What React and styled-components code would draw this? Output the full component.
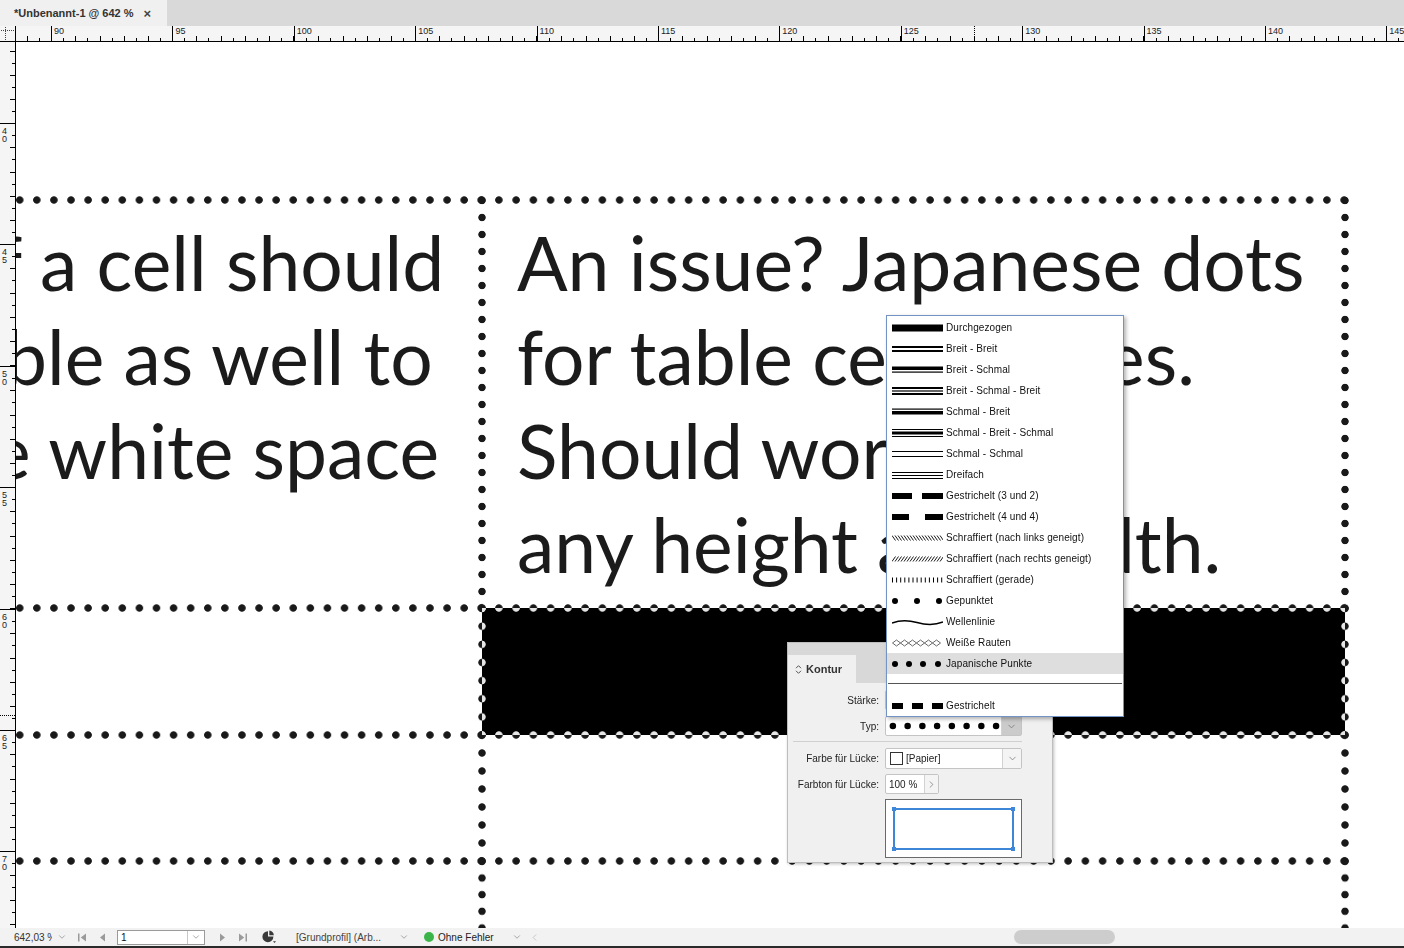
import React from "react";
import styled, { createGlobalStyle } from "styled-components";
import { ChevronDown, ChevronRight, ChevronLeft } from "lucide-react";

const SEG = 121.4;
const MM = SEG / 5;

const GlobalStyle = createGlobalStyle`
  html, body { margin: 0; padding: 0; background: #fff; overflow: hidden; }
  body { font-family: "Liberation Sans", Arial, sans-serif; }
`;

const Window = styled.div`
  width: 1404px;
  height: 948px;
  display: flex;
  flex-direction: column;
  overflow: hidden;
`;

/* ---------- tab bar ---------- */

const TabBar = styled.div`
  height: 26px;
  flex-shrink: 0;
  background: #d9d9d9;
  display: flex;
`;

const DocTab = styled.div`
  width: 167px;
  background: #f0f0f0;
  display: flex;
  align-items: center;
  gap: 10px;
  padding-left: 14px;
  box-sizing: border-box;
  font: bold 11px "Liberation Sans", Arial, sans-serif;
  color: #333;
`;

const CloseX = styled.span`
  font-size: 13px;
  color: #444;
`;

/* ---------- rulers ---------- */

const RulerRow = styled.div`
  height: 16px;
  flex-shrink: 0;
  display: flex;
`;

const Corner = styled.div`
  width: 16px;
  flex-shrink: 0;
  background: #f5f5f5;
  border-right: 1px solid #000;
  border-bottom: 1px solid #000;
  box-sizing: border-box;
  display: flex;
`;

const HRuler = styled.div`
  flex: 1;
  position: relative;
  display: flex;
  overflow: hidden;
  background: #f5f5f5;
  border-bottom: 1px solid #000;
  box-sizing: border-box;
`;

const HSeg = styled.div`
  flex: 0 0 ${SEG}px;
  margin-left: ${(p) => p.$offset || 0}px;
  box-sizing: border-box;
  border-left: 1px solid #000;
  padding-left: 2px;
  font-size: 9px;
  line-height: 11px;
  color: #222;
  background-image:
    repeating-linear-gradient(to right, transparent 0 ${MM - 1}px, #000 ${MM - 1}px ${MM}px),
    repeating-linear-gradient(to right, transparent 0 ${MM / 2 - 1}px, #000 ${MM / 2 - 1}px ${MM / 2}px, transparent ${MM / 2}px ${MM}px);
  background-size: 100% 5px, 100% 3px;
  background-position: left bottom, left bottom;
  background-repeat: no-repeat;
`;

const HCursor = styled.div`
  position: absolute;
  top: 0;
  bottom: 0;
  width: 1px;
  background: repeating-linear-gradient(to bottom, #000 0 1px, transparent 1px 2px);
`;

const Workspace = styled.div`
  flex: 1;
  min-height: 0;
  display: flex;
`;

const VRuler = styled.div`
  width: 16px;
  flex-shrink: 0;
  position: relative;
  display: flex;
  flex-direction: column;
  overflow: hidden;
  background: #f5f5f5;
  border-right: 1px solid #000;
  box-sizing: border-box;
`;

const VSeg = styled.div`
  flex: 0 0 ${SEG}px;
  margin-top: ${(p) => p.$offset || 0}px;
  box-sizing: border-box;
  border-top: 1px solid #000;
  padding: 3px 0 0 2px;
  display: flex;
  flex-direction: column;
  font-size: 9px;
  line-height: 8px;
  color: #222;
  background-image:
    repeating-linear-gradient(to bottom, transparent 0 ${MM - 1}px, #000 ${MM - 1}px ${MM}px),
    repeating-linear-gradient(to bottom, transparent 0 ${MM / 2 - 1}px, #000 ${MM / 2 - 1}px ${MM / 2}px, transparent ${MM / 2}px ${MM}px);
  background-size: 5px 100%, 3px 100%;
  background-position: right top, right top;
  background-repeat: no-repeat;
`;

const VCursor = styled.div`
  position: absolute;
  left: 0;
  right: 0;
  height: 1px;
  background: repeating-linear-gradient(to right, #000 0 1px, transparent 1px 2px);
`;

/* ---------- canvas / document ---------- */

const Canvas = styled.div`
  flex: 1;
  position: relative;
  overflow: hidden;
  background: #fff;
  isolation: isolate;
`;

const Table = styled.div`
  position: absolute;
  left: -30px;
  top: 158px;
  display: grid;
  grid-template-columns: 496px 863px;
  grid-template-rows: 408px 127px 126px 200px;
`;

const Cell = styled.div`
  min-width: 0;
  background: ${(p) => (p.$fill ? "#000" : "transparent")};
  padding: 15px 0 0 ${(p) => p.$pad || 0}px;
  font-family: Lato, "Noto Sans", sans-serif;
  font-size: 75px;
  line-height: 94px;
  color: #1b1b1b;
  white-space: nowrap;
`;

const TextLine = styled.div`
  margin-left: ${(p) => p.$shift || 0}px;
`;

const DotsLayer = styled.div`
  position: absolute;
  inset: 0;
  pointer-events: none;
  mix-blend-mode: difference;
`;

const DotRun = styled.div`
  position: absolute;
  background-image: radial-gradient(circle at center, #e6e6e6 3.3px, rgba(230, 230, 230, 0) 4.1px);
  background-repeat: ${(p) => (p.$vertical ? "repeat-y" : "repeat-x")};
`;

function DotLine({ x, y, len, vertical }) {
  const n = Math.max(1, Math.round(len / 17.3));
  const step = len / n;
  const style = vertical
    ? { left: x - 5, top: y - step / 2, width: 10, height: len + step, backgroundSize: `10px ${step}px` }
    : { left: x - step / 2, top: y - 5, width: len + step, height: 10, backgroundSize: `${step}px 10px` };
  return <DotRun $vertical={vertical} style={style} />;
}

const COLS = [496, 863];
const ROWS = [408, 127, 126, 200];

function TableStrokes() {
  const xs = [0, COLS[0], COLS[0] + COLS[1]];
  const ys = ROWS.reduce((acc, h) => [...acc, acc[acc.length - 1] + h], [0]);
  const lines = [];
  ys.slice(0, ROWS.length).forEach((y, r) => {
    COLS.forEach((w, c) => lines.push({ key: `h${r}${c}`, x: xs[c], y, len: w }));
  });
  [xs[1], xs[2]].forEach((x, c) => {
    ROWS.forEach((h, r) => lines.push({ key: `v${c}${r}`, x, y: ys[r], len: h, vertical: true }));
  });
  return (
    <DotsLayer>
      {lines.map(({ key, ...l }) => (
        <DotLine key={key} {...l} />
      ))}
    </DotsLayer>
  );
}

/* ---------- Kontur panel ---------- */

const Panel = styled.div`
  position: absolute;
  left: 771px;
  top: 600px;
  width: 266px;
  z-index: 2;
  background: #f0f0f0;
  border: 1px solid #bdbdbd;
  box-sizing: border-box;
  box-shadow: 1px 1px 3px rgba(0, 0, 0, 0.25);
  font-family: "Liberation Sans", Arial, sans-serif;
  font-size: 10px;
  color: #222;
`;

const PanelHeader = styled.div`
  height: 40px;
  background: #d8d8d8;
  display: flex;
  align-items: flex-end;
`;

const PanelTab = styled.div`
  width: 68px;
  height: 28px;
  background: #f0f0f0;
  display: flex;
  align-items: center;
  gap: 4px;
  padding-left: 7px;
  box-sizing: border-box;
  font: bold 11px "Liberation Sans", Arial, sans-serif;
  color: #333;
`;

const PanelBody = styled.div`
  padding: 7px 0 4px;
  display: flex;
  flex-direction: column;
`;

const FormRow = styled.div`
  display: grid;
  grid-template-columns: 91px auto;
  column-gap: 6px;
  align-items: center;
  justify-content: start;
  margin-top: ${(p) => p.$mt || 0}px;
`;

const Label = styled.span`
  text-align: right;
  white-space: nowrap;
`;

const Divider = styled.div`
  height: 1px;
  width: 229px;
  margin: 5px 0 6px 5px;
  background: #cfcfcf;
`;

const Field = styled.div`
  position: relative;
  width: ${(p) => p.$w}px;
  height: ${(p) => p.$h || 20}px;
  display: flex;
  background: #fff;
  border: 1px solid #c4c4c4;
  border-radius: 2px;
  box-sizing: border-box;
`;

const FieldValue = styled.div`
  flex: ${(p) => (p.$fixed ? `0 0 ${p.$fixed}px` : 1)};
  display: flex;
  align-items: center;
  gap: 3px;
  padding-left: ${(p) => p.$pl ?? 3}px;
  overflow: hidden;
`;

const FieldButton = styled.div`
  width: ${(p) => p.$w || 18}px;
  display: flex;
  align-items: center;
  justify-content: center;
  border-left: 1px solid #d2d2d2;
  background: ${(p) => (p.$pressed ? "#cbcbcb" : "#f4f4f4")};
  color: #6a6a6a;
`;

const Swatch = styled.span`
  width: 11px;
  height: 11px;
  border: 1px solid #333;
  background: #fff;
`;

const PreviewBox = styled.div`
  width: 137px;
  height: 59px;
  box-sizing: border-box;
  border: 1px solid #6a6a6a;
  background: #fff;
  padding: 8px 7px 7px;
  display: flex;
`;

const PreviewFrame = styled.div`
  flex: 1;
  position: relative;
  border: 2px solid #3d86d8;
`;

const Handle = styled.span`
  position: absolute;
  width: 4px;
  height: 4px;
  background: #3d86d8;
  ${(p) => (p.$top ? "top: -3px;" : "bottom: -3px;")}
  ${(p) => (p.$left ? "left: -3px;" : "right: -3px;")}
`;

/* ---------- stroke type dropdown ---------- */

const Menu = styled.div`
  position: absolute;
  left: 0;
  bottom: 100%;
  width: 238px;
  z-index: 3;
  background: #fff;
  border: 1px solid #7393c4;
  box-sizing: border-box;
  padding-top: 1px;
  box-shadow: 2px 2px 4px rgba(0, 0, 0, 0.3);
`;

const MenuItem = styled.div`
  height: 21px;
  display: flex;
  align-items: center;
  gap: 3px;
  padding-left: 5px;
  background: ${(p) => (p.$active ? "#dedede" : "transparent")};
  font: 10px "Liberation Sans", Arial, sans-serif;
  letter-spacing: 0.1px;
  color: #111;
  white-space: nowrap;
`;

const MenuRule = styled.div`
  height: 1px;
  margin: 9px 1px 11px;
  background: #555;
`;

const LINE_TYPES = [
  ["Durchgezogen", "solid"],
  ["Breit - Breit", "bb"],
  ["Breit - Schmal", "bs"],
  ["Breit - Schmal - Breit", "bsb"],
  ["Schmal - Breit", "sb"],
  ["Schmal - Breit - Schmal", "sbs"],
  ["Schmal - Schmal", "ss"],
  ["Dreifach", "triple"],
  ["Gestrichelt (3 und 2)", "dash32"],
  ["Gestrichelt (4 und 4)", "dash44"],
  ["Schraffiert (nach links geneigt)", "hatchL"],
  ["Schraffiert (nach rechts geneigt)", "hatchR"],
  ["Schraffiert (gerade)", "hatchV"],
  ["Gepunktet", "dotted"],
  ["Wellenlinie", "wavy"],
  ["Weiße Rauten", "diamonds"],
  ["Japanische Punkte", "japanese"],
];

const range = (n) => Array.from({ length: n }, (_, i) => i);

function Sample({ kind }) {
  const bars = (list) =>
    list.map(([y, h], i) => <rect key={i} x="0" y={y} width="51" height={h} />);
  const boxes = (list) =>
    list.map(([x, w], i) => <rect key={i} x={x} y="3" width={w} height="6" />);
  const dots = (list) => list.map((cx) => <circle key={cx} cx={cx} cy="6" r="3" />);
  let shapes;
  switch (kind) {
    case "solid":
      shapes = bars([[2.5, 7]]);
      break;
    case "bb":
      shapes = bars([[3, 2], [7, 2]]);
      break;
    case "bs":
      shapes = bars([[2.5, 3.5], [7.5, 1.2]]);
      break;
    case "bsb":
      shapes = bars([[2, 2], [5.4, 1.2], [8, 2]]);
      break;
    case "sb":
      shapes = bars([[2.5, 1.2], [5, 3.5]]);
      break;
    case "sbs":
      shapes = bars([[2, 1], [4.5, 3], [9, 1]]);
      break;
    case "ss":
      shapes = bars([[3, 1], [8, 1]]);
      break;
    case "triple":
      shapes = bars([[3, 1], [6, 1], [9, 1]]);
      break;
    case "dash32":
      shapes = boxes([[0, 20], [30, 21]]);
      break;
    case "dash44":
      shapes = boxes([[0, 17], [33, 18]]);
      break;
    case "dashed":
      shapes = boxes([[0, 11], [20, 11], [40, 11]]);
      break;
    case "hatchL":
      shapes = (
        <path
          d={range(17).map((i) => `M${i * 3} 3.5L${i * 3 + 3.5} 8.5`).join("")}
          stroke="#000"
          strokeWidth="0.9"
          fill="none"
        />
      );
      break;
    case "hatchR":
      shapes = (
        <path
          d={range(17).map((i) => `M${i * 3} 8.5L${i * 3 + 3.5} 3.5`).join("")}
          stroke="#000"
          strokeWidth="0.9"
          fill="none"
        />
      );
      break;
    case "hatchV":
      shapes = (
        <path
          d={range(13).map((i) => `M${0.5 + i * 4.1} 3.5V8.5`).join("")}
          stroke="#000"
          strokeWidth="1"
          fill="none"
        />
      );
      break;
    case "dotted":
      shapes = dots([3, 25, 47]);
      break;
    case "wavy":
      shapes = (
        <path d="M0 7C8 4 16 4 25 6.5S42 9.5 51 6" stroke="#000" strokeWidth="1.5" fill="none" />
      );
      break;
    case "diamonds":
      shapes = range(6).map((i) => {
        const x = i * 8 + 0.5;
        return (
          <polygon
            key={i}
            points={`${x},6 ${x + 4},3 ${x + 8},6 ${x + 4},9`}
            fill="#fff"
            stroke="#444"
            strokeWidth="0.8"
          />
        );
      });
      break;
    case "japanese":
      shapes = dots([3, 17, 31, 46]);
      break;
    default:
      shapes = null;
  }
  return (
    <svg width="51" height="12" viewBox="0 0 51 12">
      {shapes}
    </svg>
  );
}

function StrokeMenu() {
  return (
    <Menu>
      {LINE_TYPES.map(([name, kind]) => (
        <MenuItem key={kind} $active={kind === "japanese"}>
          <Sample kind={kind} />
          {name}
        </MenuItem>
      ))}
      <MenuRule />
      <MenuItem>
        <Sample kind="dashed" />
        Gestrichelt
      </MenuItem>
    </Menu>
  );
}

function CollapseIcon() {
  return (
    <svg width="7" height="11" viewBox="0 0 7 11">
      <path d="M1 4.2L3.5 1.7L6 4.2M1 6.8L3.5 9.3L6 6.8" stroke="#555" strokeWidth="1" fill="none" />
    </svg>
  );
}

function KonturPanel() {
  return (
    <Panel>
      <PanelHeader>
        <PanelTab>
          <CollapseIcon />
          Kontur
        </PanelTab>
      </PanelHeader>
      <PanelBody>
        <FormRow>
          <Label>Stärke:</Label>
          <Field $w={137}>
            <FieldValue>1 Pt</FieldValue>
          </Field>
        </FormRow>
        <FormRow $mt={6}>
          <Label>Typ:</Label>
          <Field $w={137}>
            <StrokeMenu />
            <FieldValue $pl={0}>
              <svg width="117" height="18" viewBox="0 0 117 18">
                {range(8).map((i) => (
                  <circle key={i} cx={7 + i * 15} cy="9" r="3.3" />
                ))}
              </svg>
            </FieldValue>
            <FieldButton $w={19} $pressed>
              <ChevronDown size={11} strokeWidth={1.5} />
            </FieldButton>
          </Field>
        </FormRow>
        <Divider />
        <FormRow>
          <Label>Farbe für Lücke:</Label>
          <Field $w={137} $h={21}>
            <FieldValue $pl={4}>
              <Swatch />
              [Papier]
            </FieldValue>
            <FieldButton>
              <ChevronDown size={11} strokeWidth={1.5} />
            </FieldButton>
          </Field>
        </FormRow>
        <FormRow $mt={5}>
          <Label>Farbton für Lücke:</Label>
          <Field $w={54}>
            <FieldValue $fixed={35}>100 %</FieldValue>
            <FieldButton>
              <ChevronRight size={11} strokeWidth={1.5} />
            </FieldButton>
          </Field>
        </FormRow>
        <FormRow $mt={5}>
          <span />
          <PreviewBox>
            <PreviewFrame>
              <Handle $top $left />
              <Handle $top />
              <Handle $left />
              <Handle />
            </PreviewFrame>
          </PreviewBox>
        </FormRow>
      </PanelBody>
    </Panel>
  );
}

/* ---------- status bar ---------- */

const StatusBar = styled.div`
  height: 20px;
  flex-shrink: 0;
  display: flex;
  align-items: center;
  background: #f2f2f2;
  border-bottom: 2px solid #2a2a2a;
  box-sizing: border-box;
  font: 10px "Liberation Sans", Arial, sans-serif;
  color: #333;
`;

const Slot = styled.div`
  margin-left: ${(p) => p.$ml || 0}px;
  width: ${(p) => (p.$w ? `${p.$w}px` : "auto")};
  overflow: hidden;
  display: flex;
  align-items: center;
  flex-shrink: 0;
  color: ${(p) => p.$color || "inherit"};
  white-space: nowrap;
`;

const PageField = styled.div`
  width: 88px;
  height: 15px;
  display: flex;
  background: #fff;
  border: 1px solid #9a9a9a;
  box-sizing: border-box;
`;

const PageValue = styled.div`
  flex: 1;
  padding-left: 3px;
  line-height: 13px;
  color: #111;
`;

const PageButton = styled.div`
  width: 16px;
  border-left: 1px solid #c8c8c8;
  display: flex;
  align-items: center;
  justify-content: center;
  color: #777;
`;

const OkDot = styled.span`
  width: 10px;
  height: 10px;
  border-radius: 50%;
  background: #3bb54a;
`;

const ScrollTrack = styled.div`
  flex: 1;
  height: 100%;
  display: flex;
  align-items: center;
`;

const Thumb = styled.div`
  width: 101px;
  height: 14px;
  border-radius: 7px;
  background: #cdcdcd;
  margin-left: ${(p) => p.$offset}px;
`;

const NavIcon = ({ dir, end }) => (
  <svg width={end ? 8 : 5} height="9" viewBox={end ? "0 0 8 9" : "0 0 5 9"}>
    {dir === "left" ? (
      end ? (
        <>
          <rect x="0" y="0.5" width="1.5" height="8" fill="#9a9a9a" />
          <path d="M8 0.5L2.8 4.5L8 8.5Z" fill="#9a9a9a" />
        </>
      ) : (
        <path d="M5 0.5L0 4.5L5 8.5Z" fill="#9a9a9a" />
      )
    ) : end ? (
      <>
        <path d="M0 0.5L5.2 4.5L0 8.5Z" fill="#9a9a9a" />
        <rect x="6.5" y="0.5" width="1.5" height="8" fill="#9a9a9a" />
      </>
    ) : (
      <path d="M0 0.5L5 4.5L0 8.5Z" fill="#9a9a9a" />
    )}
  </svg>
);

function ProfileIcon() {
  return (
    <svg width="15" height="14" viewBox="0 0 15 14">
      <path d="M6 1.2A5.5 5.5 0 1 0 11.4 6.6L6 6.6Z" fill="#3a3a3a" />
      <path d="M7.3 0.6A5.6 5.6 0 0 1 11.9 5.2L7.3 5.2Z" fill="#3a3a3a" />
      <path d="M11 11.2L14 11.2L12.5 13Z" fill="#3a3a3a" />
    </svg>
  );
}

function Status() {
  return (
    <StatusBar>
      <Slot $ml={14} $w={38}>
        642,03 %
      </Slot>
      <Slot $ml={5} $color="#777">
        <ChevronDown size={10} strokeWidth={1.5} />
      </Slot>
      <Slot $ml={11}>
        <NavIcon dir="left" end />
      </Slot>
      <Slot $ml={14}>
        <NavIcon dir="left" />
      </Slot>
      <Slot $ml={12}>
        <PageField>
          <PageValue>1</PageValue>
          <PageButton>
            <ChevronDown size={10} strokeWidth={1.5} />
          </PageButton>
        </PageField>
      </Slot>
      <Slot $ml={15}>
        <NavIcon dir="right" />
      </Slot>
      <Slot $ml={14}>
        <NavIcon dir="right" end />
      </Slot>
      <Slot $ml={15}>
        <ProfileIcon />
      </Slot>
      <Slot $ml={19} $color="#444">
        [Grundprofil] (Arb...
      </Slot>
      <Slot $ml={18} $color="#777">
        <ChevronDown size={10} strokeWidth={1.5} />
      </Slot>
      <Slot $ml={15}>
        <OkDot />
      </Slot>
      <Slot $ml={4} $color="#222">
        Ohne Fehler
      </Slot>
      <Slot $ml={18} $color="#777">
        <ChevronDown size={10} strokeWidth={1.5} />
      </Slot>
      <Slot $ml={7} $color="#b5b5b5">
        <ChevronLeft size={11} strokeWidth={1.5} />
      </Slot>
      <ScrollTrack>
        <Thumb $offset={474} />
      </ScrollTrack>
    </StatusBar>
  );
}

/* ---------- app ---------- */

const H_LABELS = range(14).map((i) => 85 + i * 5);
const V_LABELS = range(9).map((i) => 35 + i * 5);

export default function App() {
  return (
    <>
      <GlobalStyle />
      <Window>
        <TabBar>
          <DocTab>
            *Unbenannt-1 @ 642 %<CloseX>×</CloseX>
          </DocTab>
        </TabBar>
        <RulerRow>
          <Corner>
            <svg width="15" height="15" viewBox="0 0 15 15">
              <path d="M5.5 1V15M1 4.5H14" stroke="#444" strokeWidth="1" strokeDasharray="1 1" fill="none" />
            </svg>
          </Corner>
          <HRuler>
            {H_LABELS.map((n, i) => (
              <HSeg key={n} $offset={i === 0 ? -(SEG - 35) : 0}>
                {n}
              </HSeg>
            ))}
            <HCursor style={{ left: 958 }} />
          </HRuler>
        </RulerRow>
        <Workspace>
          <VRuler>
            {V_LABELS.map((n, i) => (
              <VSeg key={n} $offset={i === 0 ? -(SEG - 81) : 0}>
                {String(n)
                  .split("")
                  .map((d, j) => (
                    <span key={j}>{d}</span>
                  ))}
              </VSeg>
            ))}
            <VCursor style={{ top: 673 }} />
          </VRuler>
          <Canvas>
            <Table>
              <Cell>
                <TextLine $shift={10}>f a cell should</TextLine>
                <TextLine $shift={19}>ble as well to</TextLine>
                <TextLine $shift={5}>e white space</TextLine>
              </Cell>
              <Cell $pad={35}>
                <TextLine>An issue? Japanese dots</TextLine>
                <TextLine>for table cell strokes.</TextLine>
                <TextLine>Should work for</TextLine>
                <TextLine>any height and width.</TextLine>
              </Cell>
              <Cell />
              <Cell $fill />
              <Cell />
              <Cell />
              <Cell />
              <Cell />
              <TableStrokes />
            </Table>
            <KonturPanel />
          </Canvas>
        </Workspace>
        <Status />
      </Window>
    </>
  );
}
